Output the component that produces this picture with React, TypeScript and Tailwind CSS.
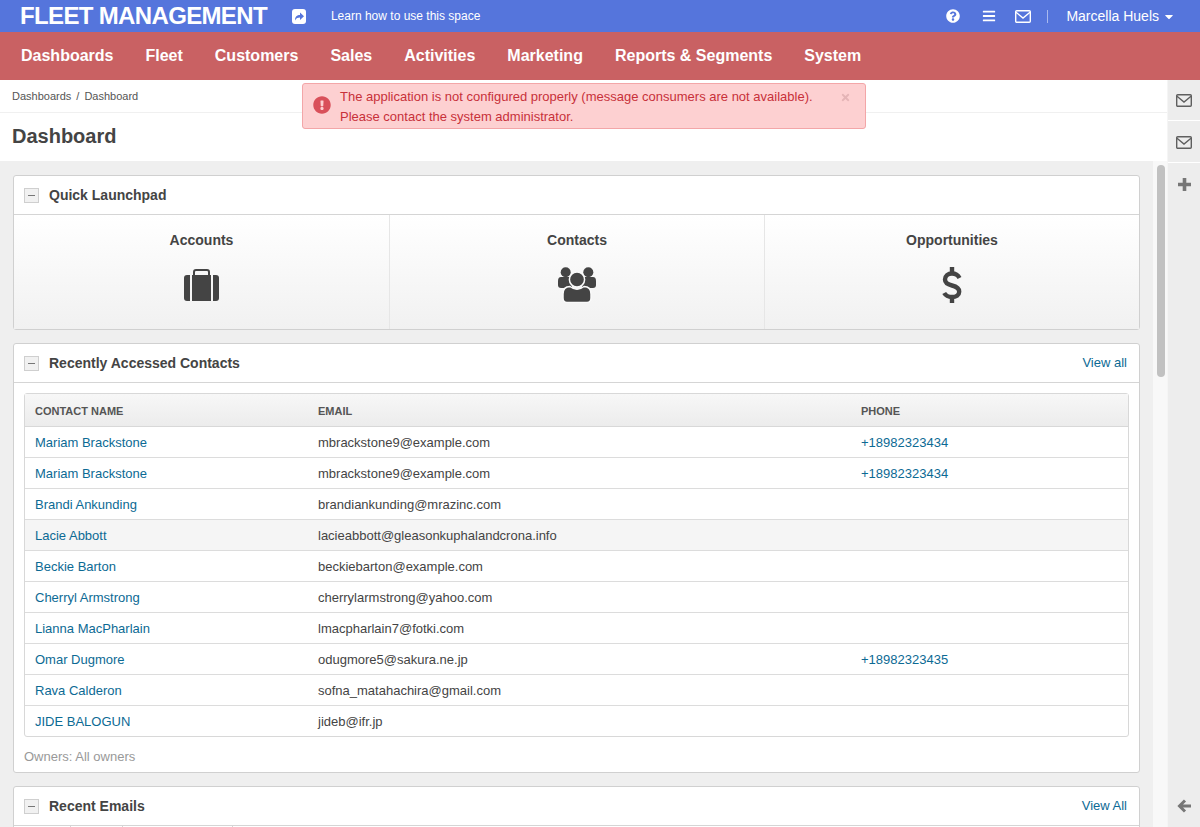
import { FaBars, FaCaretDown, FaExclamationCircle, FaQuestionCircle, FaTimes } from 'react-icons/fa';

const NAV = ['Dashboards', 'Fleet', 'Customers', 'Sales', 'Activities', 'Marketing', 'Reports & Segments', 'System'];

const CONTACTS = [
  { name: 'Mariam Brackstone', email: 'mbrackstone9@example.com', phone: '+18982323434' },
  { name: 'Mariam Brackstone', email: 'mbrackstone9@example.com', phone: '+18982323434' },
  { name: 'Brandi Ankunding', email: 'brandiankunding@mrazinc.com', phone: '' },
  { name: 'Lacie Abbott', email: 'lacieabbott@gleasonkuphalandcrona.info', phone: '', hover: true },
  { name: 'Beckie Barton', email: 'beckiebarton@example.com', phone: '' },
  { name: 'Cherryl Armstrong', email: 'cherrylarmstrong@yahoo.com', phone: '' },
  { name: 'Lianna MacPharlain', email: 'lmacpharlain7@fotki.com', phone: '' },
  { name: 'Omar Dugmore', email: 'odugmore5@sakura.ne.jp', phone: '+18982323435' },
  { name: 'Rava Calderon', email: 'sofna_matahachira@gmail.com', phone: '' },
  { name: 'JIDE BALOGUN', email: 'jideb@ifr.jp', phone: '' },
];

function Mail({ className }: { className?: string }) {
  return (
    <svg viewBox="0 0 16 13" className={className} fill="none" stroke="currentColor" strokeWidth="1.4">
      <rect x="0.7" y="0.7" width="14.6" height="11.6" rx="1" />
      <path d="M1 2.2 L8 8 L15 2.2" />
    </svg>
  );
}

function ShareIcon() {
  return (
    <svg viewBox="0 0 14 15" className="ml-[25px] h-[15px] w-[14px]">
      <rect width="14" height="15" rx="3" fill="#fff" />
      <path d="M3 11.5 C3 7.5 5 6 8 6 V3.5 L12 7.2 L8 11 V8.6 C6 8.6 4.2 9.2 3 11.5 Z" fill="#5575dc" />
    </svg>
  );
}

function SuitcaseIcon() {
  return (
    <svg viewBox="0 0 35 32" className="h-[32px] w-[35px]" fill="#444">
      <path d="M10 7 V3 Q10 1 12 1 H23 Q25 1 25 3 V7" fill="none" stroke="#444" strokeWidth="2" />
      <path d="M6 6 V32 H3 Q0 32 0 29 V9 Q0 6 3 6 Z" />
      <rect x="8" y="6" width="19" height="26" />
      <path d="M29 6 H32 Q35 6 35 9 V29 Q35 32 32 32 H29 Z" />
    </svg>
  );
}

function UsersIcon() {
  return (
    <svg viewBox="0 0 38 36" className="h-[36px] w-[38px]" fill="#444">
      <circle cx="7.7" cy="5.3" r="5" />
      <circle cx="30.3" cy="5.3" r="5" />
      <path d="M0 14 Q0 10 3 10 H12 Q14 10 14 14 V21 H3 Q0 21 0 18 Z" />
      <path d="M38 14 Q38 10 35 10 H26 Q24 10 24 14 V21 H35 Q38 21 38 18 Z" />
      <circle cx="19" cy="12.5" r="7.6" stroke="#fafafa" strokeWidth="1.5" />
      <path d="M5 31 V27 Q5 19.5 12 19.5 Q19 25 26 19.5 Q33 19.5 33 27 V31 Q33 35.5 29 35.5 H9 Q5 35.5 5 31 Z" stroke="#fafafa" strokeWidth="1.5" />
    </svg>
  );
}

function DollarIcon() {
  return (
    <svg viewBox="0 0 20 36" className="h-[36px] w-[20px]" fill="none" stroke="#444" strokeWidth="4.4">
      <path d="M17.5 11 C16 8 13 6.5 10 6.5 C6 6.5 3 9 3 12.5 C3 16 6 17.5 10 18.5 C14 19.5 17.2 21 17.2 24.7 C17.2 28 14 30 10 30 C7 30 3.8 28.8 2.2 26" />
      <path d="M10 0 V7 M10 30 V36" />
    </svg>
  );
}

function CardHeader({ title, action }: { title: string; action?: string }) {
  return (
    <div className="flex h-[39px] items-center border-b border-[#d5d5d5] pl-[10px] pr-3">
      <span className="flex h-[15px] w-[15px] items-center justify-center border border-[#cfcfcf] bg-[#f1f1f1]">
        <span className="h-px w-[7px] bg-[#777]" />
      </span>
      <span className="ml-[10px] text-[14px] font-bold text-[#444]">{title}</span>
      {action && <a className="ml-auto text-[13px] text-[#0c6a94]">{action}</a>}
    </div>
  );
}

function Launch({ label, className, children }: { label: string; className: string; children: React.ReactNode }) {
  return (
    <div className={`flex flex-col items-center pt-[15px] ${className}`}>
      <span className="text-[14px] leading-[20px] font-bold text-[#444]">{label}</span>
      <div className="mt-[17px] flex h-[36px] items-center justify-center">{children}</div>
    </div>
  );
}

export default function App() {
  return (
    <div className="flex h-[827px] w-[1200px] flex-col overflow-hidden bg-white font-['Liberation_Sans',Arial,sans-serif] text-[14px] text-[#444]">
      <header className="flex h-[32px] shrink-0 items-center bg-[#5575dc] text-white">
        <span className="ml-[20px] text-[24px] leading-[32px] font-bold tracking-[-0.65px]">FLEET MANAGEMENT</span>
        <ShareIcon />
        <span className="ml-[25px] text-[12px]">Learn how to use this space</span>
        <div className="ml-auto flex items-center">
          <FaQuestionCircle className="h-[14px] w-[14px]" />
          <FaBars className="ml-[22px] h-[14px] w-[14px]" />
          <Mail className="ml-[19px] h-[13px] w-[16px]" />
          <span className="ml-[16px] h-[13px] w-px bg-[#a9b9ee]" />
          <span className="ml-[18px] text-[14px]">Marcella Huels</span>
          <FaCaretDown className="ml-[5px] mr-[26px] h-[13px] w-[10px]" />
        </div>
      </header>

      <nav className="flex h-[48px] shrink-0 items-center gap-[32px] bg-[#c96163] pl-[21px] text-[16px] font-bold text-white">
        {NAV.map((item) => (
          <span key={item}>{item}</span>
        ))}
      </nav>

      <div className="relative flex min-h-0 flex-1">
        <main className="flex min-w-0 flex-1 flex-col">
          <div className="flex h-[33px] shrink-0 items-center border-b border-[#f0f0f0] pl-[12px] text-[11px] text-[#555]">
            <span>Dashboards</span>
            <span className="mx-[5px]">/</span>
            <span>Dashboard</span>
          </div>
          <h1 className="flex h-[48px] shrink-0 items-center pb-[2px] pl-[12px] text-[20px] font-bold text-[#444]">Dashboard</h1>

          <div className="flex min-h-0 flex-1 overflow-hidden bg-[#efefef]">
            <div className="flex w-[1153px] shrink-0 flex-col gap-[13px] pt-[14px] pl-[13px] pr-[13px]">
              <section className="shrink-0 rounded-[3px] border border-[#d0d0d0] bg-white">
                <CardHeader title="Quick Launchpad" />
                <div className="flex h-[114px] bg-gradient-to-b from-white to-[#f1f1f1]">
                  <Launch label="Accounts" className="w-[376px] border-r border-[#e6e6e6]">
                    <SuitcaseIcon />
                  </Launch>
                  <Launch label="Contacts" className="w-[375px] border-r border-[#e6e6e6]">
                    <UsersIcon />
                  </Launch>
                  <Launch label="Opportunities" className="flex-1">
                    <DollarIcon />
                  </Launch>
                </div>
              </section>

              <section className="shrink-0 rounded-[3px] border border-[#d0d0d0] bg-white">
                <CardHeader title="Recently Accessed Contacts" action="View all" />
                <div className="px-[10px] pt-[10px]">
                  <div className="rounded-[3px] border border-[#d8d8d8]">
                    <div className="grid h-[33px] grid-cols-[283px_543px_1fr] items-center border-b border-[#d8d8d8] bg-gradient-to-b from-[#f7f7f7] to-[#ececec] pl-[10px] pt-[2px] text-[11px] font-bold text-[#555]">
                      <span>CONTACT NAME</span>
                      <span>EMAIL</span>
                      <span>PHONE</span>
                    </div>
                    {CONTACTS.map((c, i) => (
                      <div
                        key={i}
                        className={`grid grid-cols-[283px_543px_1fr] items-center pl-[10px] pt-[2px] text-[13px] ${i < CONTACTS.length - 1 ? 'h-[31px] border-b border-[#dcdcdc]' : 'h-[30px]'} ${c.hover ? 'bg-[#f5f5f5]' : ''}`}
                      >
                        <a className="text-[#0c6a94]">{c.name}</a>
                        <span className="text-[#444]">{c.email}</span>
                        <a className="text-[#0c6a94]">{c.phone}</a>
                      </div>
                    ))}
                  </div>
                </div>
                <div className="flex h-[35px] items-center pl-[10px] pt-[4px] text-[13px] text-[#999]">Owners: All owners</div>
              </section>

              <section className="shrink-0 rounded-[3px] border border-[#d0d0d0] bg-white">
                <CardHeader title="Recent Emails" action="View All" />
                <div className="flex h-[20px]">
                  <span className="w-[57px] border-r border-[#d5d5d5]" />
                  <span className="w-[52px] border-r border-[#d5d5d5]" />
                  <span className="w-[110px] border-r border-[#d5d5d5]" />
                </div>
              </section>
            </div>
            <div className="w-[14px] shrink-0 bg-[#f8f8f8] pt-[4px] pl-[4px]">
              <div className="h-[212px] w-[8px] rounded-full bg-[#c1c1c1]" />
            </div>
          </div>
        </main>

        <aside className="flex w-[33px] shrink-0 flex-col border-l border-[#f5f5f5] bg-[#ededed] text-[#5f5f5f]">
          <div className="flex h-[41px] items-center justify-center border-b border-white">
            <Mail className="h-[13px] w-[16px]" />
          </div>
          <div className="flex h-[42px] items-center justify-center border-b border-white pt-[2px]">
            <Mail className="h-[13px] w-[16px]" />
          </div>
          <div className="flex h-[40px] items-center justify-center pt-[3px]">
            <svg viewBox="0 0 13 13" className="h-[13px] w-[13px]" fill="#777">
              <path d="M4.7 0 H8.3 V4.7 H13 V8.3 H8.3 V13 H4.7 V8.3 H0 V4.7 H4.7 Z" />
            </svg>
          </div>
          <div className="mt-auto flex h-[38px] items-center justify-center pb-[4px]">
            <svg viewBox="0 0 14 14" className="h-[14px] w-[14px]" fill="none" stroke="#777" strokeWidth="3">
              <path d="M14 7 H3 M8 1.5 L2.5 7 L8 12.5" />
            </svg>
          </div>
        </aside>

        <div className="absolute top-[3px] left-[302px] flex h-[46px] w-[564px] rounded-[3px] border border-[#f3a6a8] bg-[#fdd0d1] text-[13px] leading-[20px] text-[#c8313a]">
          <FaExclamationCircle className="mt-[12px] ml-[10px] h-[18px] w-[18px] shrink-0 text-[#d9505a]" />
          <div className="ml-[9px] pt-[3px]">
            The application is not configured properly (message consumers are not available).
            <br />
            Please contact the system administrator.
          </div>
          <FaTimes className="absolute top-[8px] right-[14px] h-[11px] w-[11px] text-[#e4b4b6]" />
        </div>
      </div>
    </div>
  );
}
